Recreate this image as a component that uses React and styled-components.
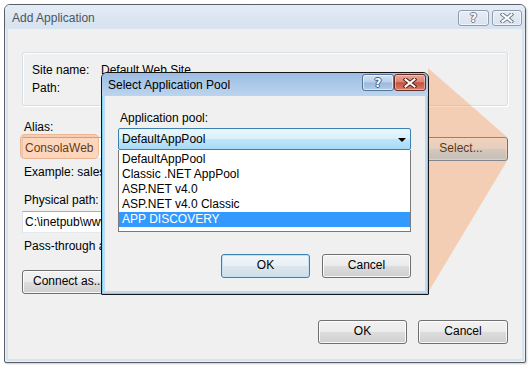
import React from 'react';
import styled, { createGlobalStyle, css } from 'styled-components';

const Global = createGlobalStyle`
  html, body { margin: 0; padding: 0; background: #fff; }
  body { font-family: "Liberation Sans", Arial, sans-serif; font-size: 12px; color: #000; }
  * { box-sizing: border-box; }
`;

const Desktop = styled.div`
  position: relative;
  width: 530px;
  height: 366px;
  padding: 4px 0 0 4px;
  overflow: hidden;
  background: #fff;
`;

const Window = styled.div`
  width: 522px;
  height: 359px;
  border: 1px solid #5b6068;
  border-radius: 6px 6px 2px 2px;
  background: #d8e3f0;
  display: flex;
  flex-direction: column;
  box-shadow: 1px 1px 2px rgba(0, 0, 0, 0.2), inset 0 0 0 1px #e9f0f8;
`;

const TitleBar = styled.div`
  height: ${p => p.$h}px;
  flex: none;
  display: flex;
  align-items: flex-start;
  padding: ${p => p.$pt}px ${p => p.$pr}px 0 ${p => p.$pl}px;
  border-radius: 5px 5px 0 0;
  background: ${p => p.$active
    ? 'linear-gradient(#9dbde2 0%, #aac8e8 45%, #bcd4ee 100%)'
    : 'linear-gradient(#e4ecf6 0%, #dbe5f2 60%, #d8e3f0 100%)'};
`;

const TitleText = styled.div`
  flex: 1;
  line-height: ${p => p.$lh}px;
  color: ${p => (p.$active ? '#000' : '#4a5562')};
  white-space: nowrap;
`;

const CaptionButtons = styled.div`
  display: flex;
  gap: ${p => p.$gap}px;
`;

const CaptionButton = styled.div`
  width: ${p => p.$w}px;
  height: ${p => p.$h}px;
  display: flex;
  align-items: center;
  justify-content: center;
  border-radius: 3px;
  ${p => p.$kind === 'inactive' && css`
    border: 1px solid #8e9cae;
    background: linear-gradient(#e6edf5, #d9e3ef);
    box-shadow: inset 0 0 0 1px rgba(255, 255, 255, 0.6);
  `}
  ${p => p.$kind === 'help' && css`
    border: 1px solid #54739a;
    background: linear-gradient(#d3e3f4 0%, #b8cfea 48%, #9ab8de 52%, #b3cbe7 100%);
    box-shadow: inset 0 0 0 1px rgba(255, 255, 255, 0.55);
  `}
  ${p => p.$kind === 'close' && css`
    border: 1px solid #6e2b22;
    background: linear-gradient(#e7a797 0%, #d98574 45%, #c65240 52%, #d4806c 100%);
    box-shadow: inset 0 0 0 1px rgba(255, 220, 210, 0.5);
  `}
`;

const QMark = styled.span`
  font-family: "DejaVu Sans", sans-serif;
  font-weight: bold;
  font-size: 12px;
  line-height: 12px;
  color: #fff;
  text-shadow: -1px 0 ${p => p.$c}, 1px 0 ${p => p.$c}, 0 -1px ${p => p.$c}, 0 1px ${p => p.$c};
`;

const CloseGlyph = ({ c }) => (
  <svg width="14" height="10" viewBox="0 0 14 10">
    <path d="M2.5 1.5 L11.5 8.5 M11.5 1.5 L2.5 8.5" stroke={c} strokeWidth="4" strokeLinecap="square" fill="none" />
    <path d="M2.5 1.5 L11.5 8.5 M11.5 1.5 L2.5 8.5" stroke="#fff" strokeWidth="2" strokeLinecap="square" fill="none" />
  </svg>
);

const Content = styled.div`
  flex: 1;
  margin: 0 3px 3px 3px;
  background: #f0f0f0;
  display: flex;
  flex-direction: column;
  padding: ${p => p.$pad};
`;

const GroupBox = styled.div`
  border: 1px solid #d5dfe5;
  border-radius: 3px;
  box-shadow: 1px 1px 0 #fff, inset 1px 1px 0 #fff;
  padding: 8px 9px;
`;

const InfoRow = styled.div`
  display: grid;
  grid-template-columns: 69px 1fr;
  height: 18px;
  line-height: 18px;
  white-space: nowrap;
`;

const Label = styled.div`
  height: 18px;
  line-height: 18px;
  padding-left: 2px;
  margin-top: ${p => p.$mt || 0}px;
  white-space: nowrap;
`;

const FieldRow = styled.div`
  display: flex;
  justify-content: space-between;
  align-items: flex-start;
  height: 24px;
  margin-top: ${p => p.$mt || 0}px;
`;

const TextBox = styled.div`
  position: relative;
  width: ${p => p.$w}px;
  height: 22px;
  margin-top: ${p => p.$mt || 0}px;
  border: 1px solid;
  border-color: #abadb3 #dbdfe6 #e3e9ef #e2e3ea;
  background: #fff;
  padding: 0 2px;
  line-height: 20px;
  white-space: nowrap;
  overflow: hidden;
`;

const Highlight = styled.div`
  position: absolute;
  left: -2px;
  top: -3px;
  width: 79px;
  height: 25px;
  border-radius: 5px;
  background: rgba(250, 148, 75, 0.38);
  border: 1px solid rgba(225, 140, 90, 0.35);
`;

const TextBoxWrap = styled.div`
  position: relative;
`;

const Button = styled.div`
  width: ${p => p.$w}px;
  height: 24px;
  flex: none;
  border: 1px solid #707070;
  border-radius: 3px;
  background: linear-gradient(#f2f2f2 0%, #ebebeb 50%, #dddddd 51%, #cfcfcf 100%);
  box-shadow: inset 0 0 0 1px rgba(255, 255, 255, 0.85);
  line-height: 21px;
  text-align: center;
  white-space: nowrap;
  overflow: hidden;
  ${p => p.$state === 'default' && css`
    border-color: #3c7fb1;
    background: linear-gradient(#f1f6fa 0%, #e8eff5 50%, #dbe5ee 51%, #d2dee8 100%);
    box-shadow: inset 0 0 0 1px #bfe3f5;
  `}
  ${p => p.$state === 'hover' && css`
    border-color: #3c7fb1;
    background: linear-gradient(#eaf6fd 0%, #d9f0fc 50%, #bee6fd 51%, #a7d9f5 100%);
    box-shadow: inset 0 0 0 1px rgba(255, 255, 255, 0.6);
  `}
  ${p => p.$align === 'left' && css`
    text-align: left;
    padding-left: 10px;
  `}
`;

const ButtonRow = styled.div`
  display: flex;
  justify-content: ${p => p.$justify || 'flex-end'};
  gap: ${p => p.$gap}px;
  margin-top: ${p => (p.$mt === 'auto' ? 'auto' : `${p.$mt}px`)};
`;

const Wedge = styled.svg`
  position: absolute;
  left: 0;
  top: 0;
  pointer-events: none;
`;

const Modal = styled.div`
  position: absolute;
  left: 101px;
  top: 72px;
  width: 328px;
  height: 223px;
  border: 1px solid #151515;
  border-radius: 6px 6px 1px 1px;
  background: #c3d9ef;
  display: flex;
  flex-direction: column;
  box-shadow: inset 0 0 0 1px #7fd2ee;
`;

const ComboWrap = styled.div`
  position: relative;
  margin-top: 1px;
`;

const Combo = styled.div`
  height: 22px;
  border: 1px solid #3c7fb1;
  border-radius: 2px;
  background: linear-gradient(#eaf6fd 0%, #d9f0fc 50%, #bee6fd 51%, #a7d9f5 100%);
  display: flex;
  align-items: center;
  justify-content: space-between;
  padding: 0 4px 0 3px;
  line-height: 20px;
`;

const Arrow = styled.span`
  width: 0;
  height: 0;
  border-left: 4px solid transparent;
  border-right: 4px solid transparent;
  border-top: 4px solid #000;
  margin-top: 1px;
`;

const Dropdown = styled.div`
  position: absolute;
  left: 0;
  top: 22px;
  width: 293px;
  height: 82px;
  border: 1px solid #7a7a7a;
  border-top: none;
  background: #fff;
  padding-top: 2px;
`;

const Item = styled.div`
  height: 15px;
  line-height: 15px;
  padding-left: 3px;
  white-space: nowrap;
  background: ${p => (p.$selected ? '#3399ff' : 'transparent')};
  color: ${p => (p.$selected ? '#fff' : '#000')};
`;

const pools = ['DefaultAppPool', 'Classic .NET AppPool', 'ASP.NET v4.0', 'ASP.NET v4.0 Classic', 'APP DISCOVERY'];

export default function App() {
  return (
    <>
      <Global />
      <Desktop>
        <Window>
          <TitleBar $h={24} $pt={5} $pr={3} $pl={7}>
            <TitleText $lh={17}>Add Application</TitleText>
            <CaptionButtons $gap={3}>
              <CaptionButton $kind="inactive" $w={31} $h={16}><QMark $c="#6f7c8c">?</QMark></CaptionButton>
              <CaptionButton $kind="inactive" $w={30} $h={16}><CloseGlyph c="#6f7c8c" /></CaptionButton>
            </CaptionButtons>
          </TitleBar>
          <Content $pad="23px 14px 0 14px">
            <GroupBox>
              <InfoRow><span>Site name:</span><span>Default Web Site</span></InfoRow>
              <InfoRow><span>Path:</span><span>/</span></InfoRow>
            </GroupBox>
            <Label $mt={12}>Alias:</Label>
            <FieldRow $mt={1}>
              <TextBoxWrap>
                <TextBox $w={230}>ConsolaWeb</TextBox>
                <Highlight />
              </TextBoxWrap>
              <Button $w={94} $state="hover">Select...</Button>
            </FieldRow>
            <Label $mt={2}>Example: sales</Label>
            <Label $mt={10}>Physical path:</Label>
            <TextBox $w={100} $mt={2}>C:\inetpub\www</TextBox>
            <Label $mt={4}>Pass-through authentication</Label>
            <ButtonRow $justify="flex-start" $gap={8} $mt={15}>
              <Button $w={104} $align="left">Connect as...</Button>
            </ButtonRow>
            <ButtonRow $gap={11} $mt={26}>
              <Button $w={89}>OK</Button>
              <Button $w={90}>Cancel</Button>
            </ButtonRow>
          </Content>
        </Window>

        <Wedge width="530" height="366">
          <polygon points="428,68 507,137 507,161 426,296" fill="rgba(250,148,75,0.36)" />
        </Wedge>

        <Modal>
          <TitleBar $active $h={23} $pt={1} $pr={2} $pl={6}>
            <TitleText $active $lh={22}>Select Application Pool</TitleText>
            <CaptionButtons $gap={0}>
              <CaptionButton $kind="help" $w={32} $h={17}><QMark $c="#3e5a80">?</QMark></CaptionButton>
              <CaptionButton $kind="close" $w={32} $h={17}><CloseGlyph c="#5a1d15" /></CaptionButton>
            </CaptionButtons>
          </TitleBar>
          <Content $pad="13px 14px 13px 13px">
            <Label>Application pool:</Label>
            <ComboWrap>
              <Combo><span>DefaultAppPool</span><Arrow /></Combo>
              <Dropdown>
                {pools.map((p, i) => (
                  <Item key={p} $selected={i === pools.length - 1}>{p}</Item>
                ))}
              </Dropdown>
            </ComboWrap>
            <ButtonRow $gap={12} $mt="auto">
              <Button $w={89} $state="default">OK</Button>
              <Button $w={89}>Cancel</Button>
            </ButtonRow>
          </Content>
        </Modal>
      </Desktop>
    </>
  );
}
